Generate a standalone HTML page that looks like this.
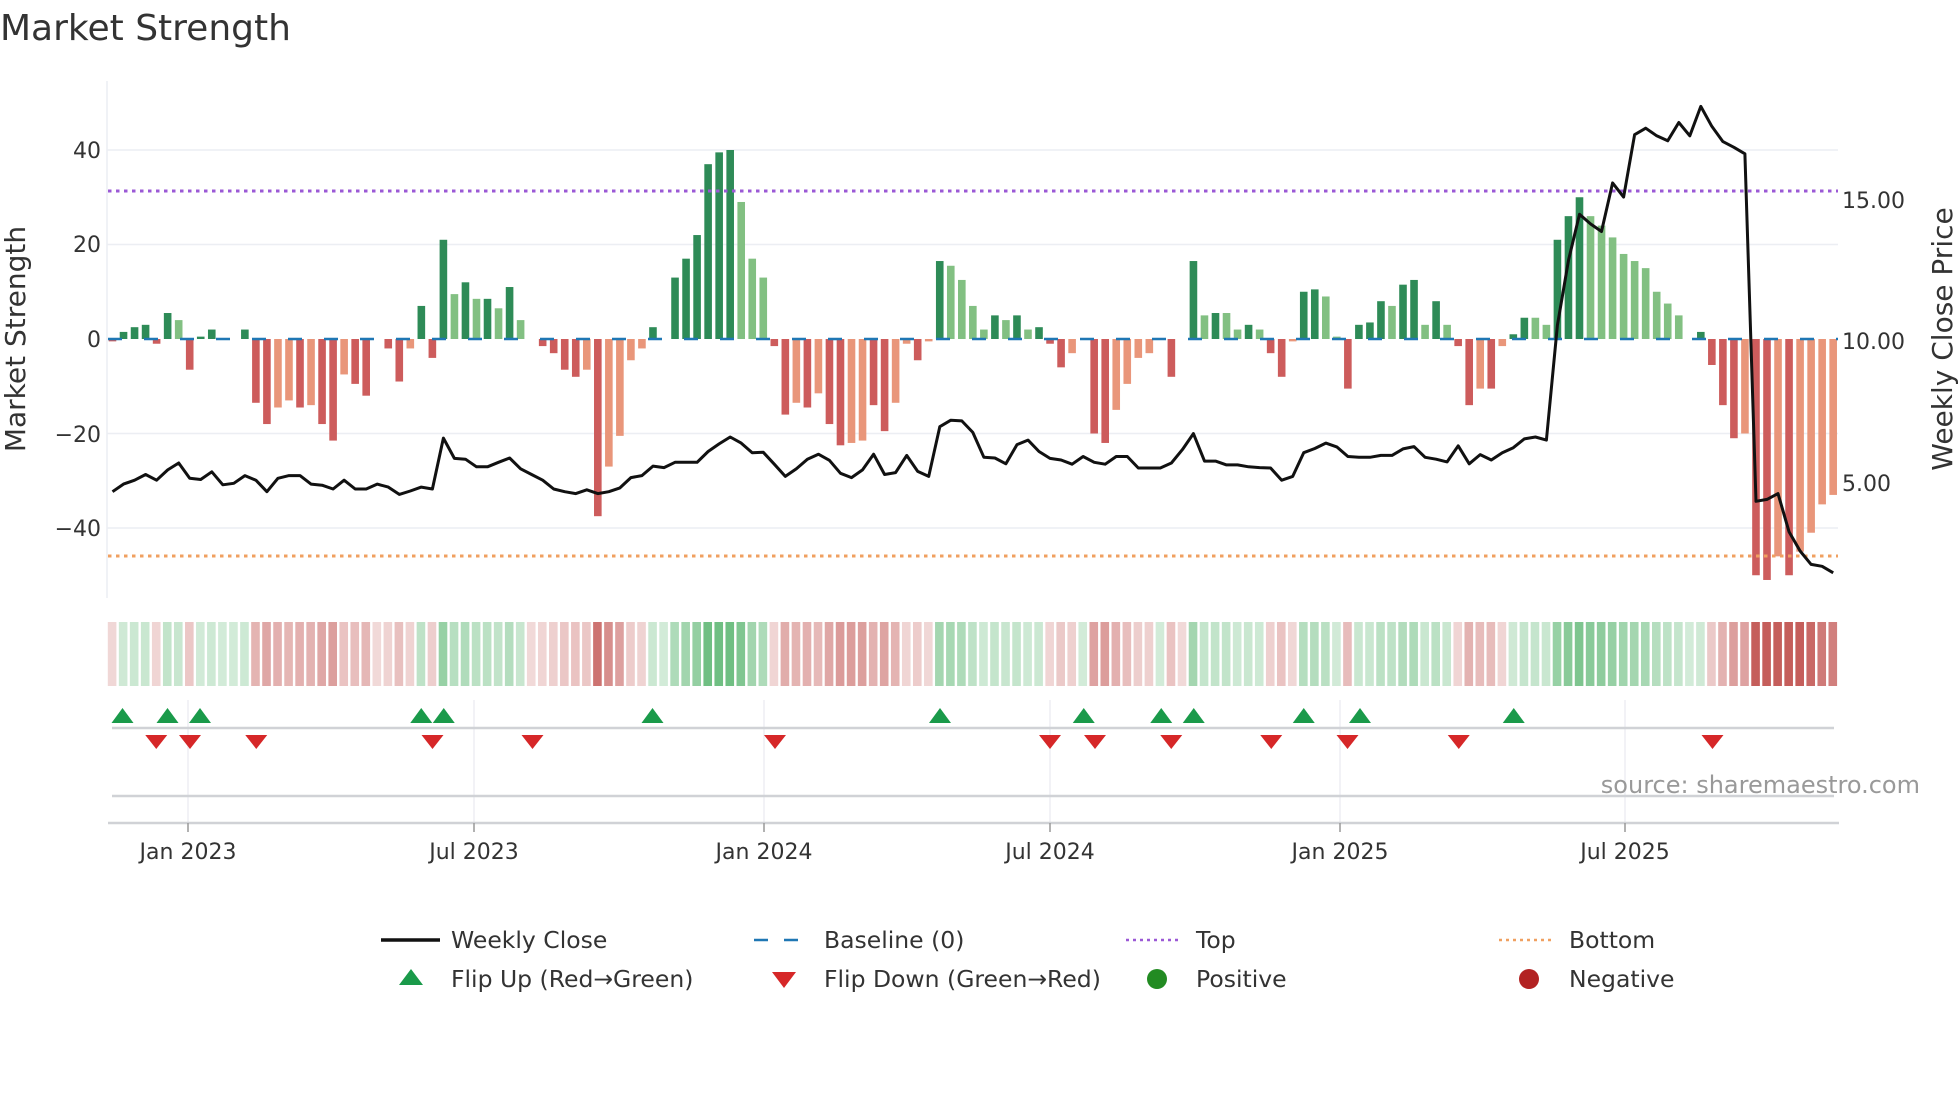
<!DOCTYPE html>
<html><head><meta charset="utf-8"><style>
html,body{margin:0;padding:0;background:#fff;width:1960px;height:1102px;overflow:hidden}
svg{display:block;font-family:"DejaVu Sans","Liberation Sans",sans-serif}
</style></head><body>
<svg id="s" width="1960" height="1102" viewBox="0 0 1960 1102" xmlns="http://www.w3.org/2000/svg">
<text x="0" y="40" font-size="36" fill="#333">Market Strength</text>
<g id="grid" stroke="#eceef3" stroke-width="1.5">
<line x1="107" y1="150" x2="1838" y2="150"/><line x1="107" y1="244.5" x2="1838" y2="244.5"/>
<line x1="107" y1="433.5" x2="1838" y2="433.5"/><line x1="107" y1="528" x2="1838" y2="528"/>
</g>
<line x1="107" y1="81" x2="107" y2="598" stroke="#eceef3" stroke-width="1.5"/>
<g font-size="22" fill="#333" text-anchor="end">
<text x="101" y="158">40</text><text x="101" y="252">20</text><text x="101" y="347">0</text>
<text x="101" y="442">−20</text><text x="101" y="536">−40</text>
</g>
<g font-size="22" fill="#333">
<text x="1842" y="208">15.00</text><text x="1842" y="349">10.00</text><text x="1842" y="491">5.00</text>
</g>
<text transform="translate(25,339) rotate(-90)" font-size="28" fill="#333" text-anchor="middle">Market Strength</text>
<text transform="translate(1952,339) rotate(-90)" font-size="28" fill="#333" text-anchor="middle">Weekly Close Price</text>
<g id="bars"></g>
<line x1="108" y1="339" x2="1838" y2="339" stroke="#1f77b4" stroke-width="2.5" stroke-dasharray="14,22"/>
<line x1="108" y1="191" x2="1838" y2="191" stroke="#9b59d6" stroke-width="3" stroke-dasharray="3.5,4.5"/>
<line x1="108" y1="556" x2="1838" y2="556" stroke="#f0a060" stroke-width="3" stroke-dasharray="3.5,4.5"/>
<polyline id="price" fill="none" stroke="#111" stroke-width="3" stroke-linejoin="round"/>
<g id="strip"></g>
<g stroke="#e8eaf0" stroke-width="1.2">
<line x1="188" y1="700" x2="188" y2="823"/><line x1="474" y1="700" x2="474" y2="823"/>
<line x1="764" y1="700" x2="764" y2="823"/><line x1="1050" y1="700" x2="1050" y2="823"/>
<line x1="1340" y1="700" x2="1340" y2="823"/><line x1="1625" y1="700" x2="1625" y2="823"/>
</g>
<line x1="112" y1="728" x2="1834" y2="728" stroke="#d0d2d6" stroke-width="2.5"/>
<line x1="112" y1="796" x2="1834" y2="796" stroke="#d0d2d6" stroke-width="2.5"/>
<line x1="108" y1="823" x2="1839" y2="823" stroke="#d0d2d6" stroke-width="2.5"/>
<g stroke="#999" stroke-width="1.5">
<line x1="188" y1="823" x2="188" y2="832"/><line x1="474" y1="823" x2="474" y2="832"/>
<line x1="764" y1="823" x2="764" y2="832"/><line x1="1050" y1="823" x2="1050" y2="832"/>
<line x1="1340" y1="823" x2="1340" y2="832"/><line x1="1625" y1="823" x2="1625" y2="832"/>
</g>
<g id="flips"></g>
<g font-size="22" fill="#333" text-anchor="middle">
<text x="188" y="859">Jan 2023</text><text x="474" y="859">Jul 2023</text><text x="764" y="859">Jan 2024</text>
<text x="1050" y="859">Jul 2024</text><text x="1340" y="859">Jan 2025</text><text x="1625" y="859">Jul 2025</text>
</g>
<text x="1920" y="793" font-size="24" fill="#999" text-anchor="end">source: sharemaestro.com</text>
<g font-size="23.5" fill="#333">
<line x1="381" y1="940" x2="440" y2="940" stroke="#111" stroke-width="3.5"/>
<text x="451" y="948">Weekly Close</text>
<line x1="754" y1="940" x2="808" y2="940" stroke="#1f77b4" stroke-width="2.5" stroke-dasharray="14,16"/>
<text x="824" y="948">Baseline (0)</text>
<line x1="1126" y1="940" x2="1182" y2="940" stroke="#9b59d6" stroke-width="2.5" stroke-dasharray="3,4"/>
<text x="1196" y="948">Top</text>
<line x1="1499" y1="940" x2="1555" y2="940" stroke="#f0a060" stroke-width="2.5" stroke-dasharray="3,4"/>
<text x="1569" y="948">Bottom</text>
<polygon points="399,985 423,985 411,969" fill="#1a9a4a"/>
<text x="451" y="987">Flip Up (Red→Green)</text>
<polygon points="772,972 796,972 784,988" fill="#d62728"/>
<text x="824" y="987">Flip Down (Green→Red)</text>
<circle cx="1157" cy="979" r="10" fill="#228b22"/>
<text x="1196" y="987">Positive</text>
<circle cx="1529" cy="979" r="10" fill="#b22222"/>
<text x="1569" y="987">Negative</text>
</g>
</svg>
<script>
(function(){
var NS="http://www.w3.org/2000/svg";
var B=[[-0.5,3],[1.5,1],[2.5,1],[3,1],[-1,3],[5.5,1],[4,2],[-6.5,3],[0.5,1],[2,1],[0,1],[0,1],[2,1],[-13.5,3],[-18,3],[-14.5,4],[-13,4],[-14.5,3],[-14,4],[-18,3],[-21.5,3],[-7.5,4],[-9.5,3],[-12,3],[0,3],[-2,3],[-9,3],[-2,4],[7,1],[-4,3],
[21,1],[9.5,2],[12,1],[8.5,2],[8.5,1],[6.5,2],[11,1],[4,2],[0,1],[-1.5,3],[-3,3],[-6.5,3],[-8,3],[-6.5,4],[-37.5,3],[-27,4],[-20.5,4],[-4.5,4],[-2,4],[2.5,1],
[0,1],[13,1],[17,1],[22,1],[37,1],[39.5,1],[40,1],[29,2],[17,2],[13,2],[-1.5,3],[-16,3],[-13.5,4],[-14.5,3],[-11.5,4],[-18,3],[-22.5,3],[-22,4],[-21.5,4],[-14,3],
[-19.5,3],[-13.5,4],[-1,4],[-4.5,3],[-0.5,4],[16.5,1],[15.5,2],[12.5,2],[7,2],[2,2],[5,1],[4,2],[5,1],[2,2],[2.5,1],[-1,3],[-6,3],[-3,4],[0,3],[-20,3],
[-22,3],[-15,4],[-9.5,4],[-4,4],[-3,4],[0,3],[-8,3],[0,3],[16.5,1],[5,2],[5.5,1],[5.5,2],[2,2],[3,1],[2,2],[-3,3],[-8,3],[-0.5,4],[10,1],[10.5,1],
[9,2],[0.5,2],[-10.5,3],[3,1],[3.5,1],[8,1],[7,2],[11.5,1],[12.5,1],[3,2],[8,1],[3,2],[-1.5,3],[-14,3],[-10.5,4],[-10.5,3],[-1.5,4],[1,1],[4.5,1],[4.5,2],
[3,2],[21,1],[26,1],[30,1],[26,2],[24,2],[21.5,2],[18,2],[16.5,2],[15,2],[10,2],[7.5,2],[5,2],[0,2],[1.5,1],[-5.5,3],[-14,3],[-21,3],[-20,4],[-50,3],
[-51,3],[-46,4],[-50,3],[-45,4],[-41,4],[-35,4],[-33,4]];
var col={1:"#2e8b57",2:"#82c082",3:"#cd5c5c",4:"#e9967a"};
var g=document.getElementById("bars"),st=document.getElementById("strip");
function X(i){return 112.5+11.03*i;}
var ups=[1,5,8,28,30,49,75,88,95,98,108,113,127],downs=[4,7,13,29,38,60,85,89,96,105,112,122,145];
var flips=[];ups.forEach(function(i){flips.push([i,1])});downs.forEach(function(i){flips.push([i,-1])});
flips.sort(function(a,b){return a[0]-b[0]});
for(var i=0;i<B.length;i++){
 var v=B[i][0],x=X(i);
 if(Math.abs(v)>0.05){var y=339-v*4.725;var r=document.createElementNS(NS,"rect");
 r.setAttribute("x",x-3.8);r.setAttribute("width",7.6);r.setAttribute("y",Math.min(y,339));r.setAttribute("height",Math.abs(339-y));
 r.setAttribute("fill",col[B[i][1]]);g.appendChild(r);}
 var state=-1;for(var k=0;k<flips.length;k++){if(flips[k][0]<=i)state=flips[k][1];}
 var a,c;
 if(state>0){a=0.25+0.55*Math.min(Math.abs(v)/35,1);c="76,175,100";}
 else{a=0.22+0.7*Math.min(Math.abs(v)/45,1);c="192,80,77";}
 var s=document.createElementNS(NS,"rect");s.setAttribute("x",x-4.7);s.setAttribute("width",8.6);
 s.setAttribute("y",622);s.setAttribute("height",64);s.setAttribute("fill","rgba("+c+","+a.toFixed(2)+")");st.appendChild(s);
}
var L1=[1285,1265,1255,1240,1255,1228,1210,1250,1253,1233,1267,1263,1243,1255,1285,1250,1243,1243,1265,1268,1278,1255,1278,1278,1265,1273,1292,1283,1273,1278,1145,1198,1200,1220,1220,1208,1197,1225,1240,1255,1278,1285,1290,1280,1290,1285,1275,1248,1243,1218,1222,1208,1208,1208,1180,1160,1142,1158,1183,1182,1213,1245,1225,1200,1187,1203,1237,1248,1228,1187,1240,1235,1190,1232,1245,1115,1098,1100,1130];
var L2=[1195,1197,1212,1162,1150,1180,1198,1202,1213,1193,1208,1213,1193,1193,1223,1223,1223,1210,1175,1133,1205,1205,1215,1215,1220,1222,1223,1255,1245,1183,1172,1158,1168,1193,1195,1195,1190,1190,1173,1167,1195,1200,1207,1165,1212,1188,1202,1183,1170,1147,1142,1150,850,680,560,585,605,478,515,352,335,355,368,320,355,278,330,370,385,402,1310,1305,1290,1390,1440,1475,1480,1497];
var L=L1.concat(L2),pts=[];
for(var j=0;j<L.length;j++){pts.push(X(j).toFixed(1)+","+(L[j]/2.6133).toFixed(1));}
document.getElementById("price").setAttribute("points",pts.join(" "));
var f=document.getElementById("flips"),h="";
var upx=[98,134,160,337,355,522,752,867,929,955,1043,1088,1211],dnx=[125,152,205,346,426,620,840,876,937,1017,1078,1167,1370];
upx.forEach(function(d){var x=d*1.25;h+='<polygon points="'+(x-11)+',723 '+(x+11)+',723 '+x+',708" fill="#1a9a4a"/>';});
dnx.forEach(function(d){var x=d*1.25;h+='<polygon points="'+(x-11)+',735 '+(x+11)+',735 '+x+',749" fill="#d62728"/>';});
f.innerHTML=h;
})();
</script>
</body></html>
